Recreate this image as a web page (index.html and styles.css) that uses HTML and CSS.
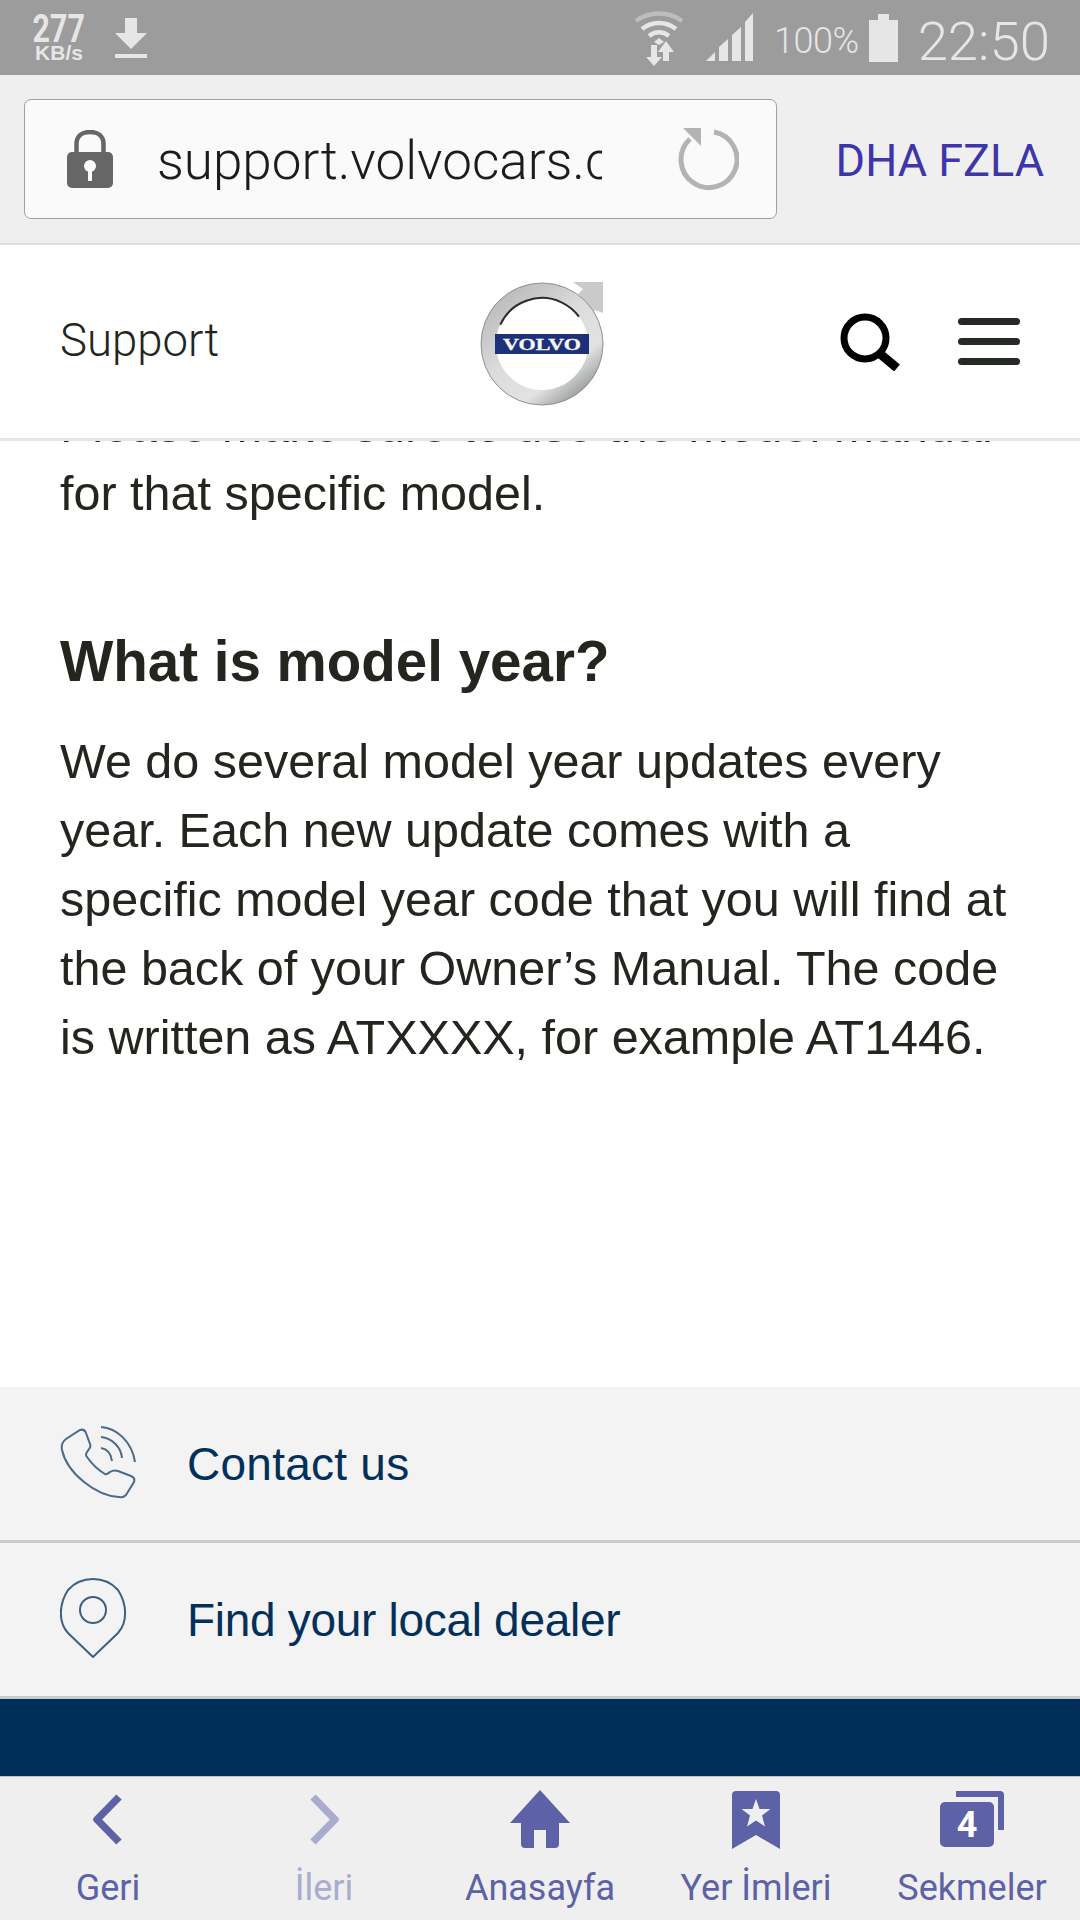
FILE: index.html
```html
<!DOCTYPE html>
<html lang="en">
<head>
    <meta charset="UTF-8">
    <meta name="viewport" content="width=device-width, initial-scale=1.0">
    <title>Volvo Support</title>
    <link rel="stylesheet" href="styles.css">
</head>
<body>
    <!-- Status bar -->
    <div class="status-bar">
        <div class="speed">
            <span class="speed-num">277</span>
            <span class="speed-unit">KB/s</span>
        </div>
        <svg class="ic-download" width="38" height="40" viewBox="0 0 38 40">
            <path d="M13 0h12v15h10L19 31 3 15h10z" fill="#e6e6e6"/>
            <rect x="3" y="36" width="32" height="4" fill="#e6e6e6"/>
        </svg>
        <div class="status-spacer"></div>
        <svg class="ic-wifi" width="50" height="56" viewBox="0 0 50 56">
            <path d="M2 11C15 1 35 1 48 11" fill="none" stroke="#bdbdbd" stroke-width="4.5"/>
            <path d="M8 19C18 11 32 11 42 19" fill="none" stroke="#e6e6e6" stroke-width="4.5"/>
            <path d="M15 26C21 21 29 21 35 26" fill="none" stroke="#e6e6e6" stroke-width="4.5"/>
            <path d="M20 32l5-4 5 4-5 3z" fill="#e6e6e6"/>
            <path d="M17 35h6v12h5l-8 9-8-9h5z" fill="#e6e6e6"/>
            <path d="M32 31l8 11h-5v9h-6v-9h-5z" fill="#e6e6e6"/>
        </svg>
        <svg class="ic-signal" width="47" height="49" viewBox="0 0 47 49">
            <path d="M0 48L9 39V48z" fill="#e6e6e6"/>
            <path d="M13 34L22 26V48H13z" fill="#e6e6e6"/>
            <path d="M26 22L35 14V48H26z" fill="#e6e6e6"/>
            <path d="M39 9L47 0V48H39z" fill="#e6e6e6"/>
        </svg>
        <span class="battery-pct">100%</span>
        <svg class="ic-battery" width="29" height="48" viewBox="0 0 29 48">
            <path d="M9 0h11v6h9v42H0V6h9z" fill="#e6e6e6"/>
        </svg>
        <span class="clock">22:50</span>
    </div>

    <!-- Browser url bar -->
    <div class="url-bar">
        <div class="url-box">
            <svg class="ic-lock" width="46" height="58" viewBox="0 0 46 58">
                <path d="M9.500 24V14C9.500 6 15 2 23 2s13.500 4 13.500 12v10" fill="none" stroke="#666" stroke-width="4.500"/>
                <path d="M5 22h36a5 5 0 0 1 5 5v26a5 5 0 0 1-5 5H5a5 5 0 0 1-5-5V27a5 5 0 0 1 5-5z" fill="#666"/>
                <circle cx="23" cy="36" r="6" fill="#fafafa"/>
                <rect x="21" y="38" width="4" height="13" fill="#fafafa"/>
            </svg>
            <div class="url-text">support.volvocars.com</div>
            <svg class="ic-reload" width="62" height="64" viewBox="0 0 62 64">
                <path d="M37 5A28 28 0 1 1 13 12" fill="none" stroke="#b3b3b3" stroke-width="5"/>
                <path d="M6 1h18v18z" fill="#b3b3b3"/>
            </svg>
        </div>
        <div class="more-btn">DHA FZLA</div>
    </div>

    <!-- Site header -->
    <header class="site-header">
        <div class="site-title">Support</div>
        <svg class="logo" width="125" height="125" viewBox="0 0 125 125">
            <defs>
                <linearGradient id="chrome" x1="0" y1="0" x2="0.8" y2="1">
                    <stop offset="0" stop-color="#b4b5b6"/>
                    <stop offset="0.5" stop-color="#dcdcdc"/>
                    <stop offset="0.8" stop-color="#e2e2e2"/>
                    <stop offset="1" stop-color="#a0a2a2"/>
                </linearGradient>
            </defs>
            <path d="M93 1h30v31l-8-3-5 6-8-7 5-6-9-9 5-5z" fill="#c9caca"/>
            <circle cx="62" cy="63" r="53.500" fill="none" stroke="url(#chrome)" stroke-width="15"/>
            <circle cx="62" cy="63" r="61" fill="none" stroke="#909191" stroke-width="1"/>
            <circle cx="62" cy="63" r="46" fill="none" stroke="#2c2c2c" stroke-width="2" stroke-dasharray="95 300" transform="rotate(205 62 63)"/>
            <rect x="15" y="53" width="94" height="20" fill="#1e3078"/>
            <text class="logo-text" x="62" y="69" text-anchor="middle" textLength="78" lengthAdjust="spacingAndGlyphs">VOLVO</text>
        </svg>
        <div class="header-icons">
            <svg class="ic-search" width="60" height="58" viewBox="0 0 60 58">
                <circle cx="25" cy="25" r="21" fill="none" stroke="#000" stroke-width="7"/>
                <path d="M39 40l18 15" fill="none" stroke="#000" stroke-width="9"/>
            </svg>
            <div class="burger">
                <span></span>
                <span></span>
                <span></span>
            </div>
        </div>
    </header>

    <!-- Article -->
    <main class="article">
        <p class="cut-line">Please make sure to use the model manual</p>
        <p class="body-text">for that specific model.</p>
        <h2>What is model year?</h2>
        <p class="body-text">We do several model year updates every<br>year. Each new update comes with a<br>specific model year code that you will find at<br>the back of your Owner’s Manual. The code<br>is written as ATXXXX, for example AT1446.</p>
    </main>

    <!-- Footer links -->
    <a class="foot-link">
        <svg class="foot-icon" width="78" height="78" viewBox="0 0 78 78">
            <path d="M6 14l14-9c3-1 5 0 6 3l4 11c1 3 0 4-3 8-1 2-2 3 0 5 5 7 11 13 18 17 2 1 3-1 5-2 3-2 5-2 8-1l13 5c3 1 4 3 3 6l-8 13c-2 2-4 3-7 2C36 71 7 48 2 25c-1-5 0-8 4-11z" fill="none" stroke="#4a6a88" stroke-width="2"/>
            <path d="M41 23c6 1 10 5 11 13M41 12c11 1 20 10 21 21M41 2c16 1 31 15 34 35" fill="none" stroke="#4a6a88" stroke-width="2"/>
        </svg>
        <span class="foot-contact">Contact us</span>
    </a>
    <a class="foot-link">
        <svg class="foot-icon pin" width="78" height="80" viewBox="0 0 78 80">
            <path d="M33 79L8 55C-2 44-1 26 8 12 15 4 24 1 33 1s18 3 25 11c9 14 10 32 0 43z" fill="none" stroke="#3d5f80" stroke-width="2"/>
            <circle cx="33" cy="32" r="13" fill="none" stroke="#3d5f80" stroke-width="2"/>
        </svg>
        <span class="foot-find">Find your local dealer</span>
    </a>
    <div class="navy-band"></div>

    <!-- Browser toolbar -->
    <nav class="toolbar">
        <div class="tool">
            <svg width="64" height="62" viewBox="0 0 64 62">
                <path d="M43 7L21 29.500 43 52" fill="none" stroke="#5c62a5" stroke-width="7.500" stroke-linejoin="round"/>
            </svg>
            <span>Geri</span>
        </div>
        <div class="tool tool-off">
            <svg width="64" height="62" viewBox="0 0 64 62">
                <path d="M21 7l22 22.500L21 52" fill="none" stroke="#a9acce" stroke-width="7.500" stroke-linejoin="round"/>
            </svg>
            <span>İleri</span>
        </div>
        <div class="tool">
            <svg width="64" height="62" viewBox="0 0 64 62">
                <path d="M32 0l30 33H51v21a4 4 0 0 1-4 4H38V40H26v18H17a4 4 0 0 1-4-4V33H2z" fill="#5c62a5"/>
            </svg>
            <span>Anasayfa</span>
        </div>
        <div class="tool">
            <svg width="64" height="62" viewBox="0 0 64 62">
                <path d="M8 5a4 4 0 0 1 4-4h40a4 4 0 0 1 4 4v54L32 45 8 59z" fill="#5c62a5"/>
                <path d="M32 9l3.500 10h11l-8.500 6.500 3 11-9-6-9 6 3-11-8.500-6.500h11z" fill="#efefef"/>
            </svg>
            <span>Yer İmleri</span>
        </div>
        <div class="tool">
            <svg width="64" height="62" viewBox="0 0 64 62">
                <path d="M16 1h44a4 4 0 0 1 4 4v35h-6V7H16z" fill="#5c62a5"/>
                <rect x="0" y="12" width="54" height="45" rx="5" fill="#5c62a5"/>
                <text class="tab-count" x="27" y="47" text-anchor="middle">4</text>
            </svg>
            <span>Sekmeler</span>
        </div>
    </nav>
</body>
</html>
```

FILE: styles.css
```css
html, body {
    margin: 0;
    padding: 0;
    width: 1080px;
    height: 1920px;
    overflow: hidden;
    background-color: white;
}
body {
    display: flex;
    flex-direction: column;
    font-family: "Liberation Sans", sans-serif;
}
svg {
    display: block;
    flex-shrink: 0;
}

/* Status bar */
.status-bar {
    height: 75px;
    flex-shrink: 0;
    box-sizing: border-box;
    background-color: #9c9c9c;
    color: #e6e6e6;
    display: flex;
    align-items: center;
    font-family: Roboto, sans-serif;
    padding: 0 30px 0 34px;
}
.speed {
    width: 50px;
    display: flex;
    flex-direction: column;
    align-items: center;
    font-weight: 700;
}
.speed-num {
    font-size: 38px;
    line-height: 30px;
    transform: scaleX(0.8);
}
.speed-unit {
    font-family: "Liberation Sans", sans-serif;
    font-size: 21px;
    line-height: 18px;
    white-space: nowrap;
}
.ic-download {
    margin-left: 28px;
}
.status-spacer {
    flex: 1;
}
.ic-wifi {
    margin-right: 22px;
}
.ic-signal {
    margin-right: 21px;
}
.battery-pct {
    font-size: 36px;
    font-weight: 300;
    letter-spacing: -0.5px;
    margin-top: 6px;
    margin-right: 10px;
}
.ic-battery {
    margin-right: 20px;
}
.clock {
    font-size: 54.5px;
    font-weight: 300;
    margin-top: 6px;
}

/* Url bar */
.url-bar {
    height: 168px;
    flex-shrink: 0;
    box-sizing: border-box;
    background-color: #efefef;
    display: flex;
    align-items: center;
    padding: 0 36px 0 24px;
    font-family: Roboto, sans-serif;
}
.url-box {
    width: 753px;
    height: 120px;
    box-sizing: border-box;
    background-color: #fafafa;
    border: 1px solid #a0a0a0;
    border-radius: 7px;
    display: flex;
    align-items: center;
    padding: 0 37px 0 42px;
}
.url-text {
    width: 445px;
    margin-left: 44px;
    padding-top: 3px;
    overflow: hidden;
    white-space: nowrap;
    font-size: 53px;
    font-weight: 300;
    color: #1c1c1c;
}
.ic-reload {
    margin-left: auto;
}
.more-btn {
    margin-left: auto;
    padding-top: 3px;
    font-size: 45px;
    color: #3d35a8;
    white-space: nowrap;
}

/* Site header */
.site-header {
    height: 198px;
    flex-shrink: 0;
    box-sizing: border-box;
    background-color: white;
    border-top: 2px solid #e0e0e0;
    border-bottom: 3px solid #e6e6e6;
    display: flex;
    align-items: center;
    justify-content: space-between;
    padding: 0 60px;
    position: relative;
    z-index: 2;
}
.site-title {
    font-family: Roboto, sans-serif;
    font-size: 45.5px;
    font-weight: 300;
    color: #22261f;
    margin-bottom: 3px;
}
.logo {
    position: absolute;
    left: 480px;
    top: 36px;
}
.logo-text {
    font-family: "Liberation Serif", serif;
    font-size: 17px;
    font-weight: 700;
    fill: #f6f6f6;
    stroke: #f6f6f6;
    stroke-width: 0.3;
}
.header-icons {
    display: flex;
    align-items: center;
    gap: 58px;
}
.burger {
    width: 62px;
    display: flex;
    flex-direction: column;
    gap: 13px;
}
.burger span {
    height: 7px;
    border-radius: 4px;
    background-color: #262a24;
}

/* Article */
.article {
    flex: 1;
    min-height: 0;
    overflow: hidden;
    padding: 0 60px;
    color: #22261f;
}
.article p,
.article h2 {
    margin: 0;
}
.article .cut-line {
    font-size: 48.5px;
    line-height: 69px;
    margin-top: -50.5px;
    margin-bottom: -0.5px;
    white-space: nowrap;
}
.body-text {
    font-size: 48.5px;
    line-height: 69px;
}
.article h2 {
    font-size: 56.5px;
    line-height: 70px;
    font-weight: 700;
    margin-top: 99px;
    margin-bottom: 30px;
}

/* Footer links */
.foot-link {
    height: 156px;
    flex-shrink: 0;
    box-sizing: border-box;
    background-color: #f3f3f3;
    border-bottom: 3px solid #cbcbcb;
    display: flex;
    align-items: center;
    padding-left: 60px;
    font-size: 46px;
    color: #03305a;
}
.foot-contact {
    letter-spacing: 0.25px;
}
.foot-find {
    letter-spacing: -0.3px;
}
.foot-icon {
    margin-right: 49px;
}
.pin {
    margin-bottom: 4px;
}
.navy-band {
    height: 77px;
    flex-shrink: 0;
    background-color: #002f59;
}

/* Browser toolbar */
.toolbar {
    height: 144px;
    flex-shrink: 0;
    box-sizing: border-box;
    border-top: 1px solid #c4c4c4;
    background-color: #efefef;
    display: flex;
    font-family: Roboto, sans-serif;
    font-size: 36px;
    color: #5c62a5;
}
.tool {
    width: 216px;
    display: flex;
    flex-direction: column;
    align-items: center;
    padding-top: 13px;
    gap: 15px;
    white-space: nowrap;
}
.tool-off {
    color: #a9acce;
}
.tab-count {
    font-family: Roboto, sans-serif;
    font-size: 36px;
    font-weight: 700;
    fill: white;
}
```
